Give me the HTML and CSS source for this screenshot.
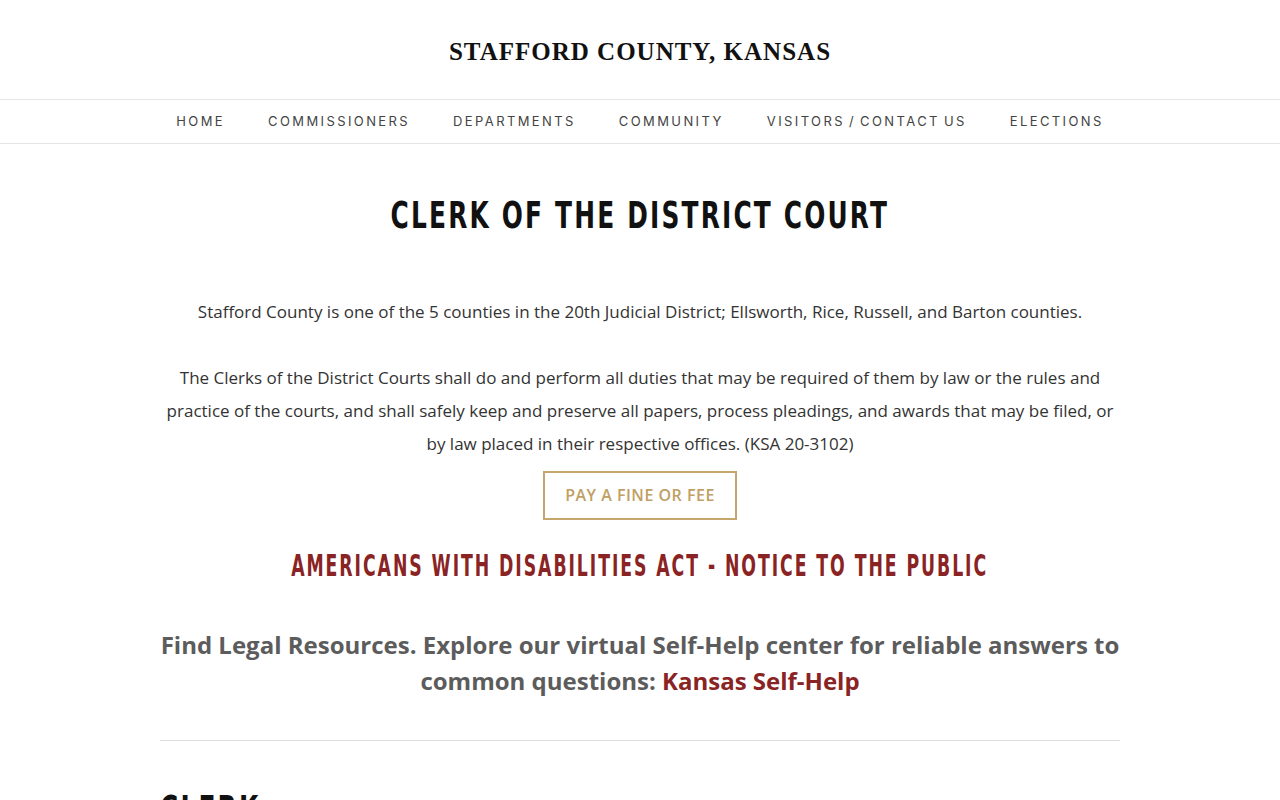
FILE: index.html
```html
<!DOCTYPE html>
<html lang="en">
<head>
<meta charset="utf-8">
<title>Clerk of the District Court - Stafford County, Kansas</title>
<link rel="stylesheet" href="styles.css">
</head>
<body>
<header class="site-header">
  <div class="brand">STAFFORD COUNTY, KANSAS</div>
</header>
<nav class="main-nav">
  <a href="#">HOME</a>
  <a href="#">COMMISSIONERS</a>
  <a href="#">DEPARTMENTS</a>
  <a href="#">COMMUNITY</a>
  <a href="#">VISITORS / CONTACT US</a>
  <a href="#">ELECTIONS</a>
</nav>
<main class="content">
  <div class="title-row"><h1 class="page-title">CLERK OF THE DISTRICT COURT</h1></div>
  <p class="intro">Stafford County is one of the 5 counties in the 20th Judicial District; Ellsworth, Rice, Russell, and Barton counties.</p>
  <p class="body-text">The Clerks of the District Courts shall do and perform all duties that may be required of them by law or the rules and practice of the courts, and shall safely keep and preserve all papers, process pleadings, and awards that may be filed, or by law placed in their respective offices. (KSA 20-3102)</p>
  <div class="btn-row"><a class="btn" href="#">PAY A FINE OR FEE</a></div>
  <div class="notice-row"><h2 class="notice">AMERICANS WITH DISABILITIES ACT - NOTICE TO THE PUBLIC</h2></div>
  <p class="resources">Find Legal Resources. Explore our virtual Self-Help center for reliable answers to common questions: <a href="#">Kansas Self-Help</a></p>
  <hr class="divider">
  <h2 class="section-title">CLERK</h2>
</main>
</body>
</html>
```

FILE: styles.css
```css
html, body {
  margin: 0;
  padding: 0;
  background: #fff;
}
body {
  font-family: "Open Sans", "Noto Sans", sans-serif;
  color: #333;
}
.site-header {
  height: 100px;
  display: flex;
  align-items: center;
  justify-content: center;
  border-bottom: 1px solid #e6e6e6;
  box-sizing: border-box;
}
.brand {
  font-family: "Liberation Serif", "DejaVu Serif", serif;
  font-weight: bold;
  font-size: 25px;
  letter-spacing: 1px;
  color: #111;
  padding-top: 5px;
}
.main-nav {
  height: 44px;
  display: flex;
  justify-content: center;
  align-items: center;
  gap: 43px;
  padding-bottom: 2px;
  border-bottom: 1px solid #e6e6e6;
  box-sizing: border-box;
}
.main-nav a {
  font-family: "Inter", "Noto Sans", sans-serif;
  font-size: 13px;
  letter-spacing: 2.4px;
  word-spacing: -2px;
  color: #444;
  text-decoration: none;
}
.content {
  width: 960px;
  margin: 0 auto;
  text-align: center;
}
.title-row {
  display: flex;
  justify-content: center;
  margin: 49px 0 0;
}
.page-title {
  display: inline-block;
  white-space: nowrap;
  font-family: "DejaVu Sans Condensed", "DejaVu Sans", sans-serif;
  font-weight: bold;
  font-size: 38px;
  letter-spacing: 3px;
  color: #111;
  margin: 0;
  line-height: 44px;
  transform: scaleX(0.727);
}
.intro {
  font-size: 17px;
  line-height: 33px;
  margin: 58px 0 0;
}
.body-text {
  font-size: 17px;
  line-height: 33px;
  margin: 33px 0 0;
}
.btn-row {
  margin-top: 11px;
}
.btn {
  display: inline-block;
  border: 2px solid #c5a66c;
  color: #c0a064;
  font-weight: 600;
  font-size: 16px;
  line-height: 21px;
  padding: 12px 20px;
  text-decoration: none;
  letter-spacing: 0.5px;
}
.notice-row {
  display: flex;
  justify-content: center;
  margin: 28px 0 0;
}
.notice {
  display: inline-block;
  white-space: nowrap;
  font-family: "DejaVu Sans Condensed", "DejaVu Sans", sans-serif;
  font-weight: bold;
  font-size: 30px;
  letter-spacing: 3px;
  color: #8a2323;
  margin: 0;
  line-height: 36px;
  transform: scaleX(0.641);
}
.resources {
  font-size: 24px;
  font-weight: 700;
  line-height: 36px;
  color: #5c5c5c;
  margin: 43px 0 0;
}
.resources a {
  color: #8a2323;
  text-decoration: none;
}
.divider {
  border: 0;
  border-top: 1px solid #ddd;
  margin: 41px 0 0;
}
.section-title {
  display: block;
  white-space: nowrap;
  font-family: "DejaVu Sans Condensed", "DejaVu Sans", sans-serif;
  font-weight: bold;
  font-size: 38px;
  letter-spacing: 3px;
  color: #111;
  text-align: left;
  margin: 46px 0 0;
  line-height: 44px;
  transform: scaleX(0.727);
  transform-origin: left center;
}
```
